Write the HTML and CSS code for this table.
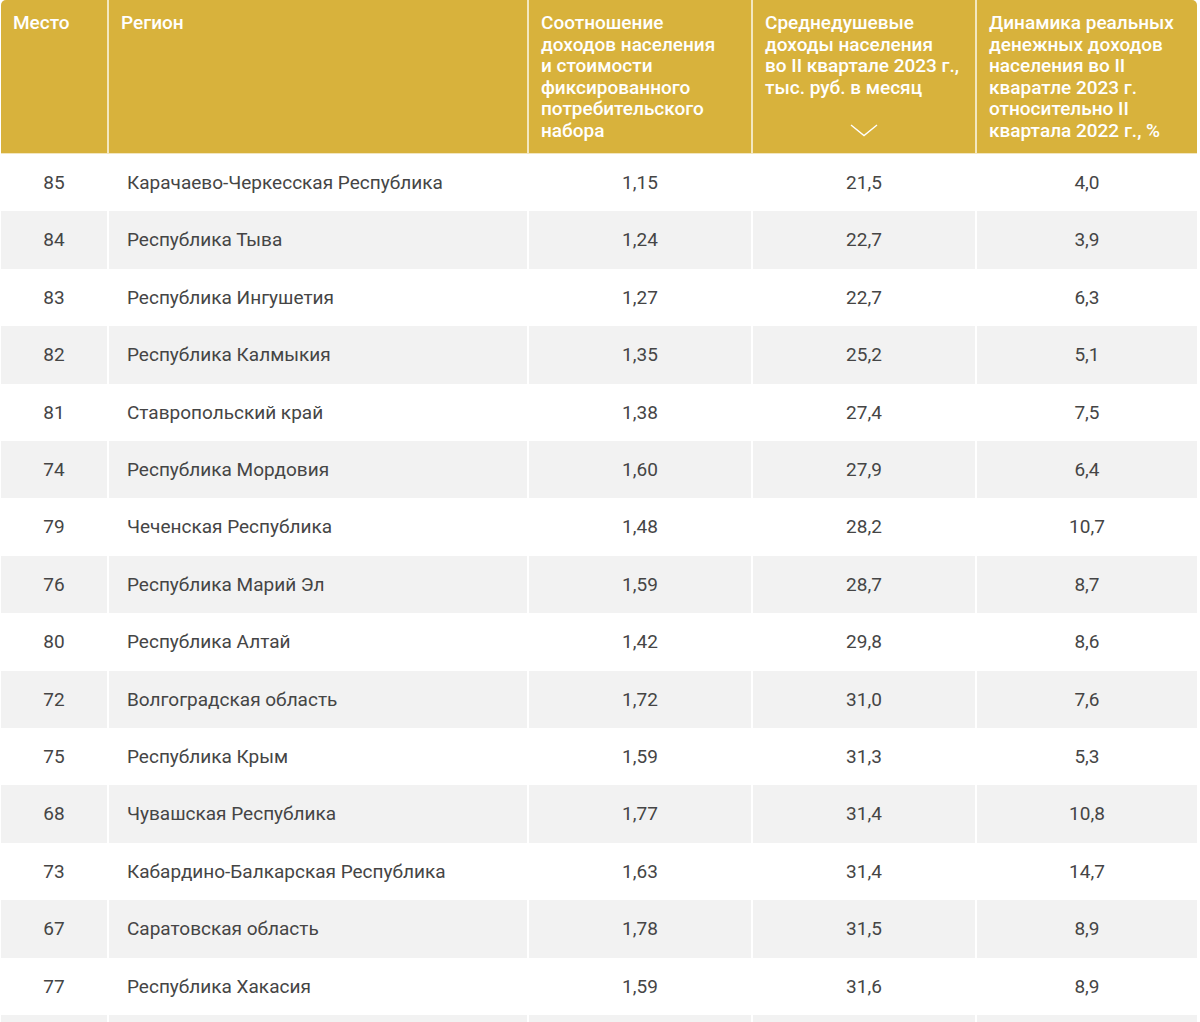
FILE: index.html
```html
<!DOCTYPE html>
<html lang="ru">
<head>
<meta charset="utf-8">
<title>Рейтинг регионов</title>
<link rel="stylesheet" href="styles.css">
</head>
<body>
<table class="rating">
  <colgroup>
    <col class="c-place">
    <col class="c-region">
    <col class="c-num">
    <col class="c-num">
    <col class="c-num-last">
  </colgroup>
  <thead>
    <tr>
      <th>Место</th>
      <th>Регион</th>
      <th>Соотношение<br>доходов населения<br>и стоимости<br>фиксированного<br>потребительского<br>набора</th>
      <th>
        <div>Среднедушевые<br>доходы населения<br>во II квартале 2023 г.,<br>тыс. руб. в месяц</div>
        <div class="sort-icon"><svg width="28" height="13" viewBox="0 0 28 13"><polyline points="1,1 14,11.5 27,1" fill="none" stroke="#fff" stroke-width="1.4"/></svg></div>
      </th>
      <th>Динамика реальных<br>денежных доходов<br>населения во II<br>кваратле 2023 г.<br>относительно II<br>квартала 2022 г., %</th>
    </tr>
  </thead>
  <tbody>
    <tr><td>85</td><td class="region">Карачаево-Черкесская Республика</td><td>1,15</td><td>21,5</td><td>4,0</td></tr>
    <tr><td>84</td><td class="region">Республика Тыва</td><td>1,24</td><td>22,7</td><td>3,9</td></tr>
    <tr><td>83</td><td class="region">Республика Ингушетия</td><td>1,27</td><td>22,7</td><td>6,3</td></tr>
    <tr><td>82</td><td class="region">Республика Калмыкия</td><td>1,35</td><td>25,2</td><td>5,1</td></tr>
    <tr><td>81</td><td class="region">Ставропольский край</td><td>1,38</td><td>27,4</td><td>7,5</td></tr>
    <tr><td>74</td><td class="region">Республика Мордовия</td><td>1,60</td><td>27,9</td><td>6,4</td></tr>
    <tr><td>79</td><td class="region">Чеченская Республика</td><td>1,48</td><td>28,2</td><td>10,7</td></tr>
    <tr><td>76</td><td class="region">Республика Марий Эл</td><td>1,59</td><td>28,7</td><td>8,7</td></tr>
    <tr><td>80</td><td class="region">Республика Алтай</td><td>1,42</td><td>29,8</td><td>8,6</td></tr>
    <tr><td>72</td><td class="region">Волгоградская область</td><td>1,72</td><td>31,0</td><td>7,6</td></tr>
    <tr><td>75</td><td class="region">Республика Крым</td><td>1,59</td><td>31,3</td><td>5,3</td></tr>
    <tr><td>68</td><td class="region">Чувашская Республика</td><td>1,77</td><td>31,4</td><td>10,8</td></tr>
    <tr><td>73</td><td class="region">Кабардино-Балкарская Республика</td><td>1,63</td><td>31,4</td><td>14,7</td></tr>
    <tr><td>67</td><td class="region">Саратовская область</td><td>1,78</td><td>31,5</td><td>8,9</td></tr>
    <tr><td>77</td><td class="region">Республика Хакасия</td><td>1,59</td><td>31,6</td><td>8,9</td></tr>
    <tr><td></td><td class="region"></td><td></td><td></td><td></td></tr>
  </tbody>
</table>
</body>
</html>
```

FILE: styles.css
```css
html, body {
  margin: 0;
  padding: 0;
  background: #ffffff;
}

body {
  font-family: Roboto, "Liberation Sans", Arial, sans-serif;
  color: #444444;
}

.rating {
  margin-left: 1px;
  width: 1196px;
  border-collapse: separate;
  border-spacing: 0;
  table-layout: fixed;
}

.c-place { width: 106px; }
.c-region { width: 420px; }
.c-num { width: 224px; }
.c-num-last { width: 222px; }

.rating th {
  background: #d8b23c;
  color: #ffffff;
  font-size: 19px;
  font-weight: 500;
  line-height: 21.6px;
  text-align: left;
  vertical-align: top;
  padding: 12px 8px 0 12px;
  height: 141px;
  white-space: nowrap;
  border-left: 2px solid #f3e7c0;
  border-bottom: 1px solid #f3e6bf;
}

.rating th:first-child {
  border-left: none;
  border-top-left-radius: 5px;
}

.rating th:last-child {
  border-top-right-radius: 5px;
}

.sort-icon {
  margin-top: 26px;
  text-align: center;
  height: 13px;
  padding-right: 4px;
}

.sort-icon svg {
  display: inline-block;
  vertical-align: top;
}

.rating td {
  font-size: 19px;
  line-height: 21.4px;
  padding: 18px 12px;
  text-align: center;
  vertical-align: middle;
  border-left: 2px solid #ffffff;
  color: #454545;
  white-space: nowrap;
}

.rating td:first-child {
  border-left: none;
}

.rating td.region {
  text-align: left;
  padding-left: 18px;
}

.rating tbody tr:nth-child(even) td {
  background: #f2f2f2;
}
```
